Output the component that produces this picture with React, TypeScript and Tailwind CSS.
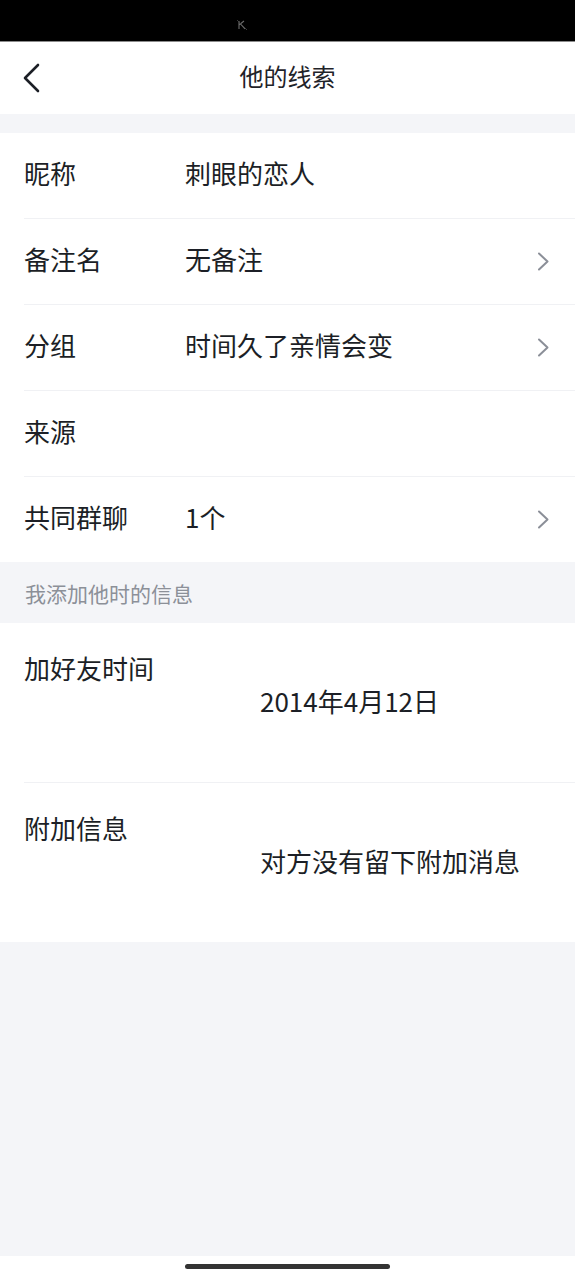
import React from "react";

const font = { fontFamily: '"Noto Sans CJK SC", "Noto Sans", sans-serif' };

function RightChevron() {
  return (
    <svg width="13" height="19" viewBox="0 0 13 19" fill="none">
      <path d="M2 1.5 L10.5 9.5 L2 17.5" stroke="#8b8f98" strokeWidth="2" strokeLinecap="round" strokeLinejoin="round" />
    </svg>
  );
}

function Row({ label, value, arrow, last }: { label: string; value?: string; arrow?: boolean; last?: boolean }) {
  return (
    <div className="pl-6">
      <div className="h-[85px] flex items-center pr-[25px]">
        <div className="w-[161px] text-[26px] text-[#1c1f26] leading-none pb-[5px]">{label}</div>
        <div className="flex-1 text-[26px] text-[#1c1f26] leading-none pb-[5px]">{value}</div>
        {arrow && <RightChevron />}
      </div>
      {!last && <div className="h-px bg-[#f0f1f4]" />}
    </div>
  );
}

function TallRow({ label, value, last }: { label: string; value: string; last?: boolean }) {
  return (
    <div className="pl-6">
      <div className="h-[159px] flex flex-col">
        <div className="mt-[29px] text-[26px] leading-[32px] text-[#1c1f26]">{label}</div>
        <div className="mt-[1px] ml-[236px] text-[26px] leading-[32px] text-[#1c1f26]">{value}</div>
      </div>
      {!last && <div className="h-px bg-[#f0f1f4]" />}
    </div>
  );
}

export default function App() {
  return (
    <div className="w-full min-h-[1278px] flex flex-col bg-[#f4f5f8]" style={font}>
      {/* status bar */}
      <div className="h-[41px] bg-black flex items-start pl-[236px] pt-[19px]">
        <svg width="12" height="12" viewBox="0 0 12 12" fill="none" className="opacity-70">
          <path d="M3 2 L3 10 M3 6 L8 2 M4.5 5 L9 10" stroke="#9a9a9a" strokeWidth="1.1" />
          <path d="M1 1 L11 11" stroke="#6a6a6a" strokeWidth="0.8" />
        </svg>
      </div>
      <div className="h-px bg-[#8c8c8c]" />

      {/* header */}
      <div className="h-[72px] bg-white grid grid-cols-[80px_1fr_80px] items-center">
        <div className="pl-[22px] flex items-center">
          <svg width="20" height="30" viewBox="0 0 20 30" fill="none">
            <path d="M16 2 L3 15 L16 28" stroke="#1c1f26" strokeWidth="2.6" strokeLinecap="round" strokeLinejoin="round" />
          </svg>
        </div>
        <div className="text-center text-[24px] text-[#1f2329] leading-none pb-[4px]">他的线索</div>
        <div />
      </div>

      <div className="h-[19px]" />

      {/* main list */}
      <div className="bg-white">
        <Row label="昵称" value="刺眼的恋人" />
        <Row label="备注名" value="无备注" arrow />
        <Row label="分组" value="时间久了亲情会变" arrow />
        <Row label="来源" />
        <Row label="共同群聊" value="1个" arrow last />
      </div>

      {/* section header */}
      <div className="h-[61px] pl-[25px] flex items-center text-[21px] text-[#8c9098] leading-none pt-[2px]">
        我添加他时的信息
      </div>

      <div className="bg-white">
        <TallRow label="加好友时间" value="2014年4月12日" />
        <TallRow label="附加信息" value="对方没有留下附加消息" last />
      </div>

      <div className="flex-1" />

      {/* home indicator */}
      <div className="h-[22px] bg-white flex justify-center pt-[8px]">
        <div className="w-[205px] h-[5px] rounded-full bg-[#333333]" />
      </div>
    </div>
  );
}
